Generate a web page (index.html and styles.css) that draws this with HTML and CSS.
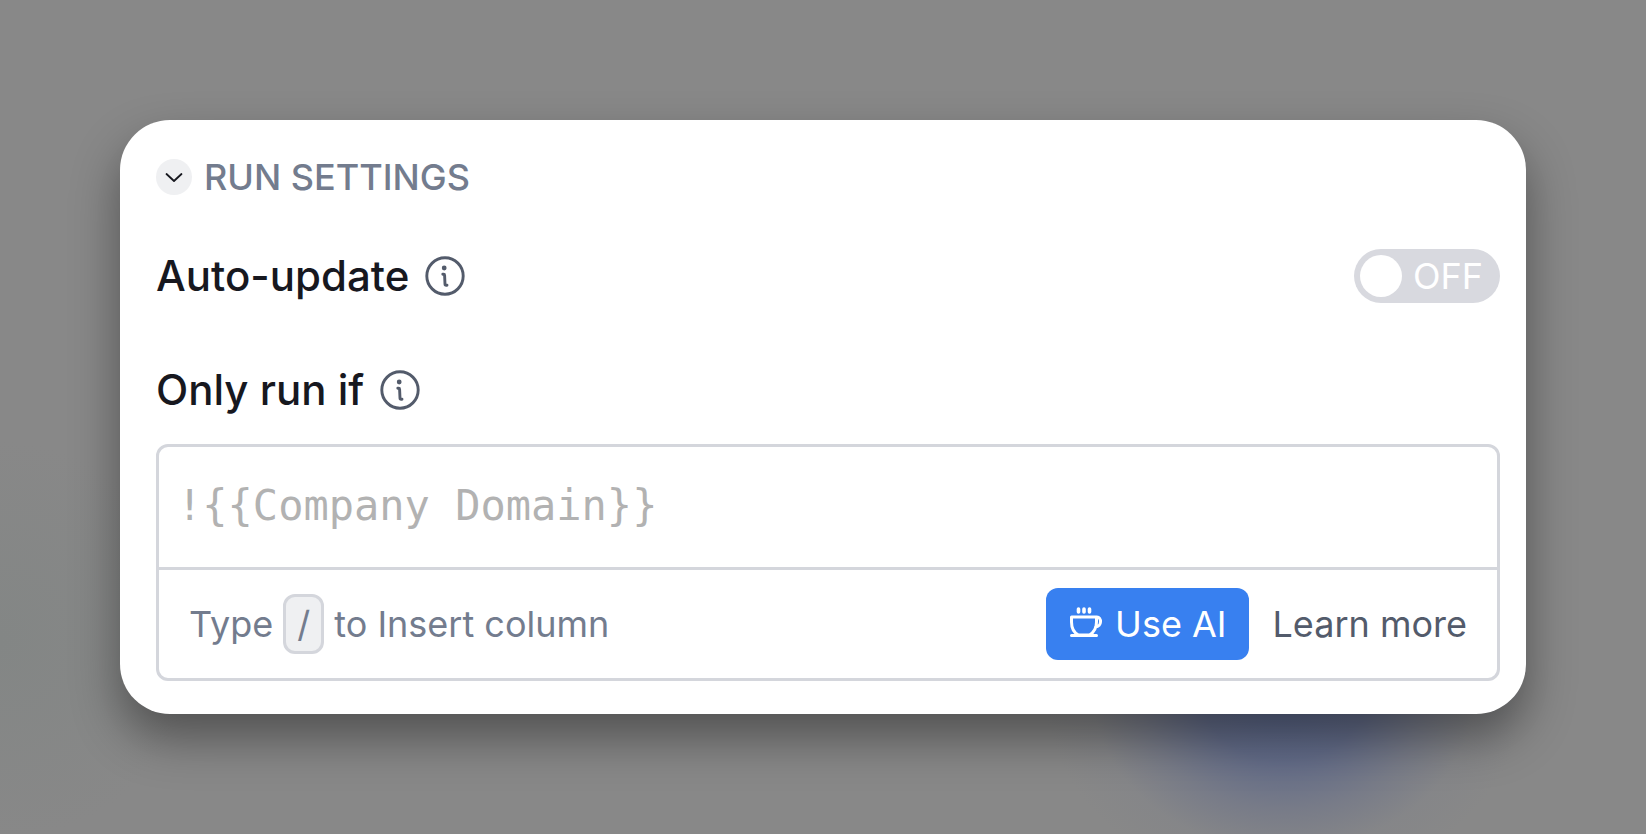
FILE: index.html
```html
<!DOCTYPE html>
<html lang="en">
<head>
<meta charset="utf-8">
<meta name="viewport" content="width=device-width, initial-scale=1">
<title>Run settings</title>
<link rel="stylesheet" href="styles.css">
</head>
<body>
<main class="card">
  <h2 class="heading">
    <button class="collapse" type="button" aria-label="Collapse run settings">
      <svg width="36" height="36" viewBox="0 0 36 36" fill="none" stroke="#17181f" stroke-width="1.8" stroke-linecap="round" stroke-linejoin="round"><path d="M10.500 15l7.500 7 7.500-7"/></svg>
    </button>
    <span>RUN SETTINGS</span>
  </h2>

  <div class="row">
    <label class="label" for="auto-update">Auto-update</label>
    <button class="info" type="button" aria-label="About auto-update">
      <svg width="42" height="42" viewBox="0 0 42 42" fill="none" stroke="#535b6b" stroke-linecap="round" stroke-linejoin="round"><circle cx="21" cy="21" r="18.2" stroke-width="2.9"/><path d="M18.800 19.200h.8q1 0 1 1l.4 8.800q0 1.200 1.200 1.200h.8" stroke-width="2.900"/><circle cx="20.200" cy="13" r="2.400" fill="#535b6b" stroke="none"/></svg>
    </button>
    <label class="switch">
      <input id="auto-update" class="switch-input" type="checkbox" role="switch">
      <span class="knob"></span>
      <span>OFF</span>
    </label>
  </div>

  <div class="row condition">
    <label class="label" for="run-if">Only run if</label>
    <button class="info" type="button" aria-label="About run conditions">
      <svg width="42" height="42" viewBox="0 0 42 42" fill="none" stroke="#535b6b" stroke-linecap="round" stroke-linejoin="round"><circle cx="21" cy="21" r="18.2" stroke-width="2.9"/><path d="M18.800 19.200h.8q1 0 1 1l.4 8.800q0 1.200 1.200 1.200h.8" stroke-width="2.900"/><circle cx="20.200" cy="13" r="2.400" fill="#535b6b" stroke="none"/></svg>
    </button>
  </div>

  <div class="field">
    <textarea id="run-if" class="formula" rows="1" placeholder="!{{Company Domain}}" spellcheck="false"></textarea>
    <div class="footer">
      <p class="hint">Type <kbd class="key">/</kbd> to Insert column</p>
      <button class="use-ai" type="button">
        <svg width="36" height="36" viewBox="0 0 36 36" fill="none" stroke="#fff" stroke-width="3" stroke-linecap="round" stroke-linejoin="round"><path d="M3.500 11h25v5c0 6-3 10.500-7 13h-11c-4-2-7-7-7-13zM3.500 29.500h25M28.500 11c5.500-.5 5.500 10-1 10"/><path d="M10.500 3v3M16 3v3M21.500 3v3" stroke-width="3.600"/></svg>
        <span>Use AI</span>
      </button>
      <a class="learn" href="#">Learn more</a>
    </div>
  </div>
</main>
</body>
</html>
```
FILE: styles.css
```css
* {
  box-sizing: border-box;
}

body {
  margin: 0;
  min-height: 100vh;
  padding: 120px;
  font-family: Inter, "Liberation Sans", sans-serif;
  font-size: 36px;
  line-height: 42px;
  color: #737c8e;
  background:
    radial-gradient(ellipse 240px 200px at 78% 690px, rgba(84, 98, 138, 0.9) 0%, rgba(86, 98, 136, 0.75) 35%, rgba(100, 108, 136, 0.45) 60%, rgba(120, 124, 138, 0.18) 80%, rgba(136, 136, 136, 0) 100%),
    radial-gradient(circle 200px at 0 640px, rgba(126, 132, 130, 0.5), rgba(136, 136, 136, 0)),
    #888;
}

button {
  border: 0;
  padding: 0;
  font: inherit;
  cursor: pointer;
}

svg {
  display: block;
}

.card {
  padding: 36px 26px 33px 36px;
  border-radius: 50px;
  background: #fff;
  box-shadow: 0 24px 48px rgba(0, 0, 0, 0.4);
}

.heading {
  display: flex;
  align-items: center;
  gap: 12px;
  margin: 0 0 51px;
  font-size: 36px;
  font-weight: 500;
}

.collapse {
  border-radius: 50%;
  background: #eff0f2;
}

.row {
  display: flex;
  align-items: center;
  gap: 15px;
  min-height: 54px;
}

.condition {
  margin: 60px 0 27px;
}

.label {
  font-size: 42px;
  font-weight: 500;
  color: #17181f;
}

.info {
  background: none;
}

.switch {
  display: flex;
  align-items: center;
  gap: 11px;
  margin-left: auto;
  padding: 6px 17px 6px 6px;
  border-radius: 27px;
  background: #d8d9df;
  color: #fff;
  cursor: pointer;
}

.switch-input {
  appearance: none;
  width: 0;
  height: 0;
  margin: 0 -11px 0 0;
}

.knob {
  width: 42px;
  height: 42px;
  border-radius: 50%;
  background: #fff;
}

.field {
  border: 3px solid #d4d6dc;
  border-radius: 12px;
}

.formula {
  display: block;
  width: 100%;
  height: 123px;
  padding: 36px 18px;
  border: 0;
  border-bottom: 3px solid #d4d6dc;
  outline: 0;
  resize: none;
  overflow: hidden;
  background: none;
  font: 42px/46px "DejaVu Sans Mono", monospace;
  color: #17181f;
}

.formula::placeholder {
  color: #b2b2b2;
  opacity: 1;
}

.footer {
  display: flex;
  align-items: center;
  gap: 24px;
  padding: 18px 30px;
}

.hint {
  display: flex;
  align-items: center;
  gap: 10px;
  margin: 0 auto 0 0;
}

.key {
  padding: 6px 11px;
  border: 3px solid #d4d6dc;
  border-radius: 12px;
  background: #eff0f2;
  font: inherit;
}

.use-ai {
  display: flex;
  align-items: center;
  gap: 11px;
  padding: 15px 22px;
  border-radius: 12px;
  background: #3880f0;
  color: #fff;
}

.learn {
  color: #535b6b;
  text-decoration: none;
}
```
